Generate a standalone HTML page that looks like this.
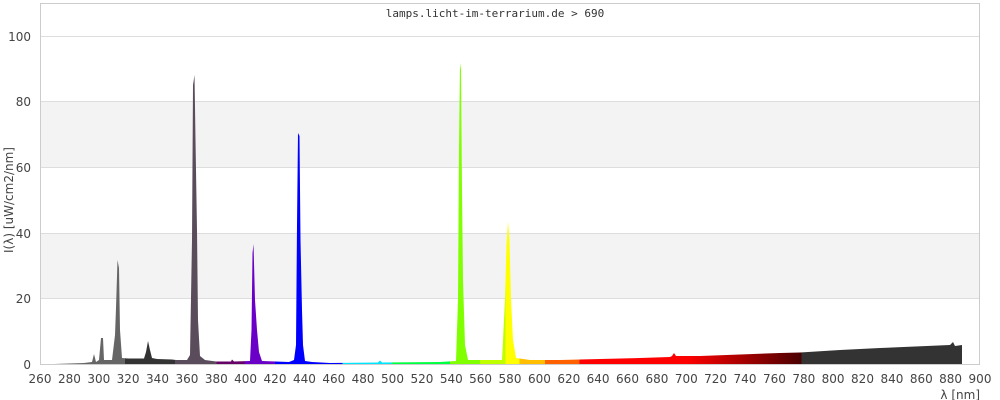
<!DOCTYPE html>
<html><head><style>body{margin:0;background:#fff}svg{display:block}</style></head><body>
<svg width="1000" height="400" xmlns="http://www.w3.org/2000/svg" font-family="DejaVu Sans, sans-serif">
<defs>
<linearGradient id="g" gradientUnits="userSpaceOnUse" x1="40" y1="0" x2="980" y2="0">
<stop offset="0" stop-color="#666"/><stop offset=".0906" stop-color="#666"/>
<stop offset=".0906" stop-color="#333"/><stop offset=".1437" stop-color="#333"/>
<stop offset=".1437" stop-color="#5b4c5c"/><stop offset=".1875" stop-color="#5b4c5c"/>
<stop offset=".1875" stop-color="#660066"/><stop offset=".218" stop-color="#660066"/>
<stop offset=".218" stop-color="#6a00c8"/><stop offset=".25" stop-color="#6a00c8"/>
<stop offset=".25" stop-color="#0000ff"/><stop offset=".322" stop-color="#0000ff"/>
<stop offset=".322" stop-color="#00e5ff"/><stop offset=".374" stop-color="#00e5ff"/>
<stop offset=".374" stop-color="#00ff40"/><stop offset=".436" stop-color="#00ff40"/>
<stop offset=".436" stop-color="#7fff00"/><stop offset=".468" stop-color="#7fff00"/>
<stop offset=".468" stop-color="#c0ff00"/><stop offset=".495" stop-color="#c0ff00"/>
<stop offset=".495" stop-color="#ffff00"/><stop offset=".51" stop-color="#ffff00"/>
<stop offset=".51" stop-color="#ffbf00"/><stop offset=".537" stop-color="#ffbf00"/>
<stop offset=".537" stop-color="#ff6000"/><stop offset=".574" stop-color="#ff6000"/>
<stop offset=".574" stop-color="#ff0000"/><stop offset=".687" stop-color="#ff0000"/>
<stop offset=".81" stop-color="#4a0000"/>
<stop offset=".81" stop-color="#333"/><stop offset="1" stop-color="#333"/>
</linearGradient>
</defs>
<rect x="40" y="101" width="940" height="66" fill="#f3f3f3"/>
<rect x="40" y="233" width="940" height="65" fill="#f3f3f3"/>
<g stroke="#ddd" stroke-width="1">
<line x1="40" y1="36.5" x2="980" y2="36.5"/><line x1="40" y1="101.5" x2="980" y2="101.5"/>
<line x1="40" y1="167.5" x2="980" y2="167.5"/><line x1="40" y1="233.5" x2="980" y2="233.5"/>
<line x1="40" y1="298.5" x2="980" y2="298.5"/>
</g>
<rect x="40.5" y="3.5" width="939" height="361" fill="none" stroke="#ccc"/>
<path fill="url(#g)" d="M54,364 L84,363 L92,362 L94,354 L96,362 L99,360 L101,338 L103,338 L104,360 L112,360 L115,335 L116,308 L117.5,260 L119,268 L120,330 L122,358 L128,358.5 L144,358.5 L146,352 L148,341 L150,350 L152,358 L157,359 L172,359.5 L176,360 L187,360 L190,355 L192,240 L193,85 L194.5,75 L195.5,140 L197,230 L198,320 L200,356 L205,360 L216,361.5 L231,361.5 L232,359.5 L234,361.5 L250,361 L251.5,330 L252.5,253 L253.5,244 L255,300 L257,330 L259,352 L262,361 L289,362 L294,360 L296,345 L297,225 L298,133 L299.5,136 L300.5,240 L302,310 L303,345 L305,361 L312,362 L330,363 L378,362.5 L380,360.5 L382,362.5 L440,362 L456,361 L458,300 L459,150 L460,63 L461,70 L462,190 L463,280 L465,345 L468,360 L502,360 L505,300 L506.5,245 L508,222 L509.5,240 L511,300 L513,340 L516,358 L530,360 L560,360 L600,359 L640,358 L670,357 L672,356 L674,353 L676,356 L700,356 L740,354.5 L780,353 L800,352.5 L840,350 L880,348 L950,345 L953,342 L955,346 L962,345 L962,364 Z"/>
<line x1="40" y1="364.5" x2="980" y2="364.5" stroke="#ccc"/>
<text x="495" y="17" font-size="11" text-anchor="middle" fill="#333" font-family="DejaVu Sans Mono, monospace">lamps.licht-im-terrarium.de &gt; 690</text>
<g font-size="12" fill="#444" text-anchor="end">
<text x="31" y="41">100</text><text x="31" y="106">80</text><text x="31" y="172">60</text>
<text x="31" y="238">40</text><text x="31" y="303">20</text><text x="31" y="369">0</text>
</g>
<g font-size="12" fill="#444" text-anchor="middle">
<text x="40" y="383">260</text><text x="69.4" y="383">280</text><text x="98.8" y="383">300</text><text x="128.1" y="383">320</text><text x="157.5" y="383">340</text><text x="186.9" y="383">360</text><text x="216.3" y="383">380</text><text x="245.6" y="383">400</text><text x="275" y="383">420</text><text x="304.4" y="383">440</text><text x="333.8" y="383">460</text><text x="363.1" y="383">480</text><text x="392.5" y="383">500</text><text x="421.9" y="383">520</text><text x="451.3" y="383">540</text><text x="480.6" y="383">560</text><text x="510" y="383">580</text><text x="539.4" y="383">600</text><text x="568.8" y="383">620</text><text x="598.1" y="383">640</text><text x="627.5" y="383">660</text><text x="656.9" y="383">680</text><text x="686.3" y="383">700</text><text x="715.6" y="383">720</text><text x="745" y="383">740</text><text x="774.4" y="383">760</text><text x="803.8" y="383">780</text><text x="833.1" y="383">800</text><text x="862.5" y="383">820</text><text x="891.9" y="383">840</text><text x="921.3" y="383">860</text><text x="950.6" y="383">880</text><text x="980" y="383">900</text>
</g>
<text x="980" y="399" font-size="12" fill="#444" text-anchor="end">λ [nm]</text>
<text transform="translate(13,200) rotate(-90)" font-size="12" fill="#444" text-anchor="middle">I(λ)  [uW/cm2/nm]</text>
</svg>
</body></html>
